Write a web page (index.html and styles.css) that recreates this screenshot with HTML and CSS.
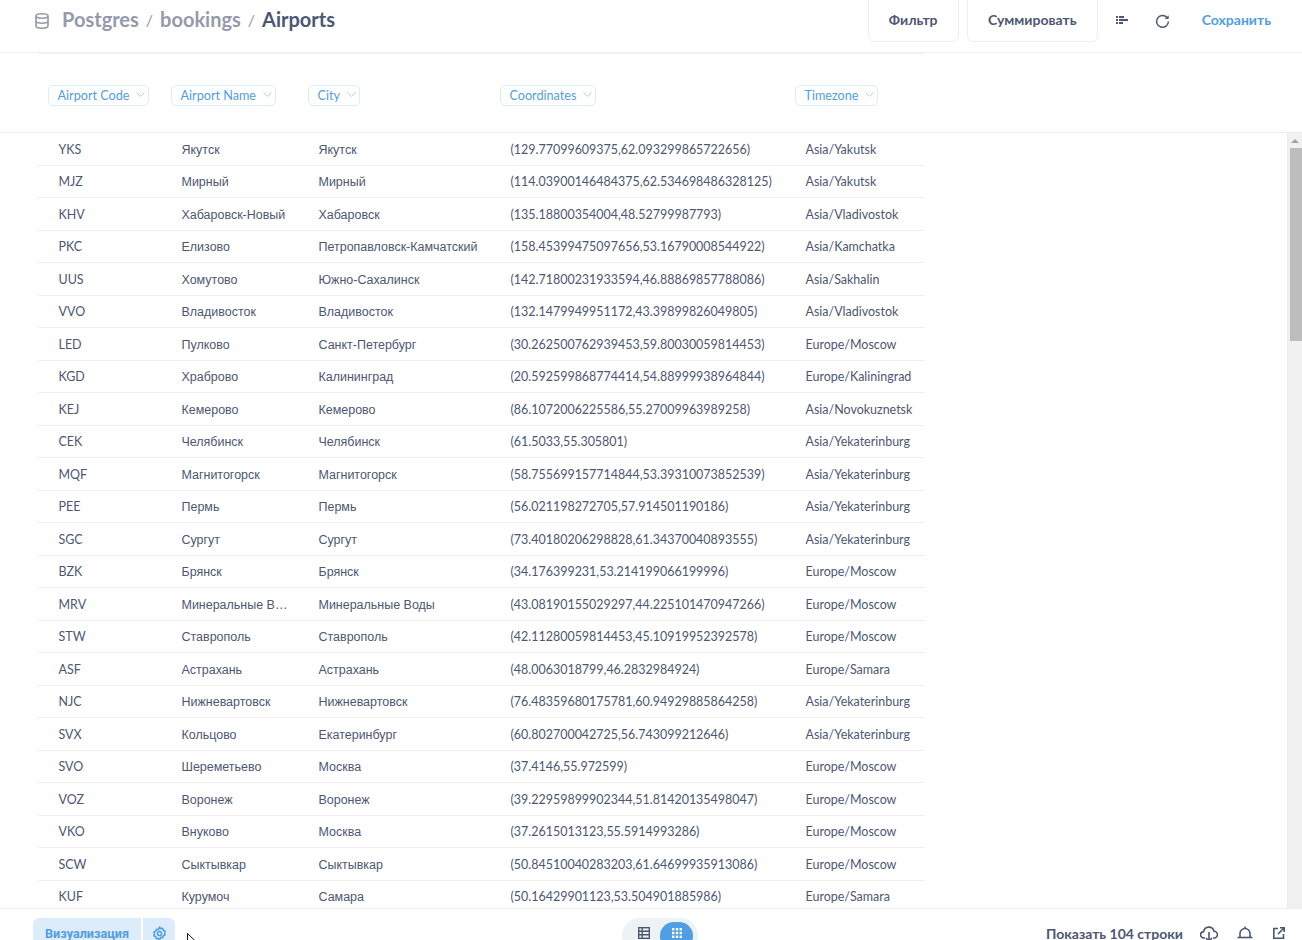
FILE: index.html
```html
<!DOCTYPE html>
<html lang="en">
<head>
    <meta charset="UTF-8">
    <meta name="viewport" content="width=device-width, initial-scale=1.0">
    <title>Airports</title>
    <link rel="stylesheet" href="styles.css">
</head>
<body>
    <header class="topbar">
        <div class="crumbs">
            <svg class="db-icon" viewBox="0 0 14 16" width="14" height="16" fill="none" stroke="#949aab" stroke-width="1.6">
                <ellipse cx="7" cy="3" rx="6" ry="2.2"/>
                <path d="M1 3v10c0 1.200 2.700 2.200 6 2.200s6-1 6-2.200V3"/>
                <path d="M1 8c0 1.200 2.700 2.200 6 2.200s6-1 6-2.200"/>
            </svg>
            <span class="crumb">Postgres</span>
            <span class="crumb-sep">/</span>
            <span class="crumb">bookings</span>
            <span class="crumb-sep">/</span>
            <span class="crumb current">Airports</span>
        </div>
        <div class="actions">
            <button class="btn btn-filter">Фильтр</button>
            <button class="btn btn-sum">Суммировать</button>
            <svg class="icon-list" viewBox="0 0 12 8" width="12" height="8" fill="#4c5773">
                <rect x="0" y="0" width="2" height="2"/><rect x="3" y="0" width="5" height="2"/>
                <rect x="0" y="3" width="2" height="2"/><rect x="3" y="3" width="9" height="2"/>
                <rect x="0" y="6" width="2" height="2"/><rect x="3" y="6" width="4" height="2"/>
            </svg>
            <svg class="icon-refresh" viewBox="0 0 16 16" width="15" height="15" fill="none" stroke="#4c5773" stroke-width="1.6">
                <path d="M12.6 3.6A6.3 6.3 0 1 0 14.3 8"/>
                <path d="M14.6 1.2v4.2h-4.2z" fill="#4c5773" stroke="none"/>
            </svg>
            <a class="save" href="#">Сохранить</a>
        </div>
    </header>

    <div class="head-row">
        <div class="head-cols">
            <div class="col"><span class="pill">Airport Code<svg class="chev" viewBox="0 0 9 5" width="9" height="5"><path d="M.5.5 4.500 4.300 8.500.5" fill="none" stroke="#a8cff2"/></svg></span></div>
            <div class="col"><span class="pill">Airport Name<svg class="chev" viewBox="0 0 9 5" width="9" height="5"><path d="M.5.5 4.500 4.300 8.500.5" fill="none" stroke="#a8cff2"/></svg></span></div>
            <div class="col"><span class="pill">City<svg class="chev" viewBox="0 0 9 5" width="9" height="5"><path d="M.5.5 4.500 4.300 8.500.5" fill="none" stroke="#a8cff2"/></svg></span></div>
            <div class="col"><span class="pill">Coordinates<svg class="chev" viewBox="0 0 9 5" width="9" height="5"><path d="M.5.5 4.500 4.300 8.500.5" fill="none" stroke="#a8cff2"/></svg></span></div>
            <div class="col"><span class="pill">Timezone<svg class="chev" viewBox="0 0 9 5" width="9" height="5"><path d="M.5.5 4.500 4.300 8.500.5" fill="none" stroke="#a8cff2"/></svg></span></div>
        </div>
    </div>

    <main class="content">
        <div class="rows">
            <div class="row"><span>YKS</span><span class="name">Якутск</span><span>Якутск</span><span>(129.77099609375,62.093299865722656)</span><span>Asia/Yakutsk</span></div>
            <div class="row"><span>MJZ</span><span class="name">Мирный</span><span>Мирный</span><span>(114.03900146484375,62.534698486328125)</span><span>Asia/Yakutsk</span></div>
            <div class="row"><span>KHV</span><span class="name">Хабаровск-Новый</span><span>Хабаровск</span><span>(135.18800354004,48.52799987793)</span><span>Asia/Vladivostok</span></div>
            <div class="row"><span>PKC</span><span class="name">Елизово</span><span>Петропавловск-Камчатский</span><span>(158.45399475097656,53.16790008544922)</span><span>Asia/Kamchatka</span></div>
            <div class="row"><span>UUS</span><span class="name">Хомутово</span><span>Южно-Сахалинск</span><span>(142.71800231933594,46.88869857788086)</span><span>Asia/Sakhalin</span></div>
            <div class="row"><span>VVO</span><span class="name">Владивосток</span><span>Владивосток</span><span>(132.1479949951172,43.39899826049805)</span><span>Asia/Vladivostok</span></div>
            <div class="row"><span>LED</span><span class="name">Пулково</span><span>Санкт-Петербург</span><span>(30.262500762939453,59.80030059814453)</span><span>Europe/Moscow</span></div>
            <div class="row"><span>KGD</span><span class="name">Храброво</span><span>Калининград</span><span>(20.592599868774414,54.88999938964844)</span><span>Europe/Kaliningrad</span></div>
            <div class="row"><span>KEJ</span><span class="name">Кемерово</span><span>Кемерово</span><span>(86.1072006225586,55.27009963989258)</span><span>Asia/Novokuznetsk</span></div>
            <div class="row"><span>CEK</span><span class="name">Челябинск</span><span>Челябинск</span><span>(61.5033,55.305801)</span><span>Asia/Yekaterinburg</span></div>
            <div class="row"><span>MQF</span><span class="name">Магнитогорск</span><span>Магнитогорск</span><span>(58.755699157714844,53.39310073852539)</span><span>Asia/Yekaterinburg</span></div>
            <div class="row"><span>PEE</span><span class="name">Пермь</span><span>Пермь</span><span>(56.021198272705,57.914501190186)</span><span>Asia/Yekaterinburg</span></div>
            <div class="row"><span>SGC</span><span class="name">Сургут</span><span>Сургут</span><span>(73.40180206298828,61.34370040893555)</span><span>Asia/Yekaterinburg</span></div>
            <div class="row"><span>BZK</span><span class="name">Брянск</span><span>Брянск</span><span>(34.176399231,53.214199066199996)</span><span>Europe/Moscow</span></div>
            <div class="row"><span>MRV</span><span class="name">Минеральные Воды</span><span>Минеральные Воды</span><span>(43.08190155029297,44.225101470947266)</span><span>Europe/Moscow</span></div>
            <div class="row"><span>STW</span><span class="name">Ставрополь</span><span>Ставрополь</span><span>(42.11280059814453,45.10919952392578)</span><span>Europe/Moscow</span></div>
            <div class="row"><span>ASF</span><span class="name">Астрахань</span><span>Астрахань</span><span>(48.0063018799,46.2832984924)</span><span>Europe/Samara</span></div>
            <div class="row"><span>NJC</span><span class="name">Нижневартовск</span><span>Нижневартовск</span><span>(76.48359680175781,60.94929885864258)</span><span>Asia/Yekaterinburg</span></div>
            <div class="row"><span>SVX</span><span class="name">Кольцово</span><span>Екатеринбург</span><span>(60.802700042725,56.743099212646)</span><span>Asia/Yekaterinburg</span></div>
            <div class="row"><span>SVO</span><span class="name">Шереметьево</span><span>Москва</span><span>(37.4146,55.972599)</span><span>Europe/Moscow</span></div>
            <div class="row"><span>VOZ</span><span class="name">Воронеж</span><span>Воронеж</span><span>(39.22959899902344,51.81420135498047)</span><span>Europe/Moscow</span></div>
            <div class="row"><span>VKO</span><span class="name">Внуково</span><span>Москва</span><span>(37.2615013123,55.5914993286)</span><span>Europe/Moscow</span></div>
            <div class="row"><span>SCW</span><span class="name">Сыктывкар</span><span>Сыктывкар</span><span>(50.84510040283203,61.64699935913086)</span><span>Europe/Moscow</span></div>
            <div class="row"><span>KUF</span><span class="name">Курумоч</span><span>Самара</span><span>(50.16429901123,53.504901885986)</span><span>Europe/Samara</span></div>
        </div>
        <div class="scrollbar">
            <div class="scroll-up"></div>
            <div class="scroll-thumb"></div>
        </div>
    </main>

    <footer class="bottombar">
        <div class="viz-group">
            <button class="viz-btn">Визуализация</button>
            <button class="viz-gear">
                <svg viewBox="0 0 16 16" width="15" height="15" fill="none" stroke="#509ee3" stroke-width="1.6">
                    <path d="M8 1l1.200 1.900 2.200-.4.6 2.100 2.100.9-.8 2 .8 2-2.100.9-.6 2.100-2.200-.4L8 15l-1.200-1.900-2.200.4-.6-2.100-2.100-.9.8-2-.8-2 2.100-.9.6-2.100 2.200.4z" stroke-linejoin="round"/>
                    <circle cx="8" cy="8" r="2.200"/>
                </svg>
            </button>
        </div>
        <div class="view-toggle">
            <span class="toggle-item">
                <svg viewBox="0 0 12 12" width="12" height="12" fill="none" stroke="#4c5773" stroke-width="1.4">
                    <rect x=".7" y=".7" width="10.600" height="10.600"/>
                    <path d="M.7 4.200h10.600M.7 7.800h10.600M4.200.7v10.600"/>
                </svg>
            </span>
            <span class="toggle-item active">
                <svg viewBox="0 0 12 12" width="12" height="12" fill="#fff">
                    <rect x="1" y="1" width="2.400" height="2.400"/><rect x="4.800" y="1" width="2.400" height="2.400"/><rect x="8.600" y="1" width="2.400" height="2.400"/>
                    <rect x="1" y="4.800" width="2.400" height="2.400"/><rect x="4.800" y="4.800" width="2.400" height="2.400"/><rect x="8.600" y="4.800" width="2.400" height="2.400"/>
                    <rect x="1" y="8.600" width="2.400" height="2.400"/><rect x="4.800" y="8.600" width="2.400" height="2.400"/><rect x="8.600" y="8.600" width="2.400" height="2.400"/>
                </svg>
            </span>
        </div>
        <div class="foot-right">
            <span class="row-count">Показать 104 строки</span>
            <svg class="icon-cloud" viewBox="0 0 18 16" width="18" height="16" fill="none" stroke="#4c5773" stroke-width="1.6">
                <path d="M5 12H4a3.200 3.200 0 0 1-.4-6.400A5.300 5.300 0 0 1 14 5.200 3.400 3.400 0 0 1 14 12h-1"/>
                <path d="M9 6v9M6 12l3 3 3-3"/>
            </svg>
            <svg class="icon-bell" viewBox="0 0 16 14" width="16" height="14" fill="none" stroke="#4c5773" stroke-width="1.6">
                <path d="M3 11V7.500a5 5 0 0 1 10 0V11"/>
                <path d="M.5 11.500h15"/>
                <path d="M8 .5v2"/>
            </svg>
            <svg class="icon-open" viewBox="0 0 12 12" width="12" height="12" fill="none" stroke="#4c5773" stroke-width="1.6">
                <path d="M5 1.500H.8v9.700h9.700V7"/>
                <path d="M5 7l6-6M7 .8h4.200V5"/>
            </svg>
        </div>
        <svg class="cursor" viewBox="0 0 10 14" width="10" height="14">
            <path d="M.5.5v10l2.500-2.300 1.800 4 1.600-.7-1.800-3.900h3.300z" fill="#fff" stroke="#111" stroke-width="1"/>
        </svg>
    </footer>
</body>
</html>
```

FILE: styles.css
```css
/* General Styles */
* {
    box-sizing: border-box;
}

html, body {
    height: 940px;
    overflow: hidden;
}

body {
    font-family: 'Lato', 'Roboto', sans-serif;
    color: #4c5773;
    background: #fff;
    margin: 0;
    display: flex;
    flex-direction: column;
}

/* Top bar */
.topbar {
    height: 53px;
    flex: none;
    display: flex;
    justify-content: space-between;
    padding: 0 31px 0 35px;
    border-bottom: 1px solid #f0f0f0;
}

.crumbs {
    display: flex;
    align-items: center;
    height: 38px;
    font-size: 20px;
    font-weight: 700;
    color: #949aab;
}

.db-icon {
    margin: 4px 13px 0 0;
}

.crumb-sep {
    font-size: 16px;
    font-weight: 400;
    margin: 0 7px;
}

.crumb.current {
    color: #4c5773;
}

.actions {
    display: flex;
    align-items: center;
    height: 38px;
}

.btn {
    align-self: flex-start;
    font-family: inherit;
    font-size: 14px;
    font-weight: 700;
    color: #4c5773;
    background: #fff;
    border: 1px solid #eeeeee;
    border-radius: 6px;
    height: 52px;
    margin-top: -10px;
    padding: 6px 0 0;
}

.btn-filter {
    width: 91px;
    margin-right: 8px;
}

.btn-sum {
    width: 131px;
    margin-right: 18px;
}

.icon-list {
    margin-top: 2px;
}

.icon-refresh {
    margin: 4px 0 0 27px;
}

.save {
    margin-left: 32px;
    font-size: 14px;
    font-weight: 700;
    color: #509ee3;
    text-decoration: none;
}

/* Table */
.head-row {
    height: 80px;
    flex: none;
    border-bottom: 1px solid #eeeeee;
    padding-left: 38px;
}

.head-cols {
    width: 886px;
    height: 79px;
    display: grid;
    grid-template-columns: 123px 137px 192px 295px 139px;
    align-items: center;
    padding-top: 4px;
    border-top: 1px solid #f0f0f0;
}

.col {
    padding-left: 10px;
}

.pill {
    display: inline-flex;
    align-items: center;
    height: 21px;
    padding: 0 2.5px 0 8.5px;
    font-size: 12.64px;
    color: #509ee3;
    border: 1px solid #dcecfa;
    border-radius: 5px;
}

.chev {
    margin-left: 7px;
    margin-top: -2px;
}

.content {
    flex: 1;
    min-height: 0;
    display: flex;
    justify-content: space-between;
}

.rows {
    margin-left: 38px;
    width: 886px;
    overflow: hidden;
}

.row {
    height: 32.5px;
    display: grid;
    grid-template-columns: 123px 137px 192px 295px 139px;
    align-items: center;
    padding-top: 1px;
    font-size: 12.48px;
    border-bottom: 1px solid #eeeeee;
    white-space: nowrap;
}

.row span {
    padding-left: 20.5px;
}

/* Lato here draws its own Cyrillic, the two name columns need the Arial look */
.row span:nth-child(2),
.row span:nth-child(3) {
    font-family: 'Liberation Sans', sans-serif;
    padding-top: 1px;
}

.row span.name {
    padding-right: 9px;
    overflow: hidden;
    text-overflow: ellipsis;
}

/* Fake scrollbar, same look as the browser one */
.scrollbar {
    width: 15px;
    flex: none;
    background: #f1f1f1;
    border-left: 1px solid #ececec;
}

.scroll-up {
    width: 0;
    height: 0;
    margin: 6px auto 0;
    border-left: 4px solid transparent;
    border-right: 4px solid transparent;
    border-bottom: 4px solid #a3a3a3;
}

.scroll-thumb {
    height: 193px;
    margin: 5px 0 0 2px;
    background: #bdbdbd;
}

/* Bottom bar */
.bottombar {
    height: 32px;
    flex: none;
    position: relative;
    display: flex;
    justify-content: space-between;
    overflow: hidden;
    padding: 9px 17px 0 33px;
    border-top: 1px solid #eeeeee;
}

.viz-group {
    display: flex;
    gap: 2px;
    width: 142px;
}

.viz-btn, .viz-gear {
    height: 36px;
    border: none;
    background: #dcecfa;
    color: #509ee3;
    font-family: 'Roboto', sans-serif;
    font-size: 12.6px;
    font-weight: 700;
    padding: 0;
}

.viz-btn {
    width: 108px;
    border-radius: 6px 0 0 6px;
    padding-bottom: 5px;
}

.viz-gear {
    width: 32px;
    border-radius: 0 6px 6px 0;
}

.viz-gear svg {
    margin-bottom: 2px;
    display: inline-block;
}

.view-toggle {
    display: flex;
    width: 76px;
    height: 36px;
    padding: 4px 5px;
    margin-left: 447px;
    background: #edf2f5;
    border-radius: 18px;
}

.toggle-item {
    width: 33px;
    height: 28px;
    display: flex;
    justify-content: center;
    padding: 5px 0 0 1px;
    border-radius: 14px;
}

.toggle-item.active {
    background: #509ee3;
    padding-left: 0;
}

.foot-right {
    display: flex;
    align-items: flex-start;
    margin-left: auto;
}

.row-count {
    font-size: 14px;
    font-weight: 700;
    margin-top: 7px;
}

.icon-cloud {
    margin: 8px 0 0 17px;
}

.icon-bell {
    margin: 8px 0 0 19px;
}

.icon-open {
    margin: 9px 0 0 20px;
}

.cursor {
    position: absolute;
    left: 187px;
    top: 24px;
}
```
